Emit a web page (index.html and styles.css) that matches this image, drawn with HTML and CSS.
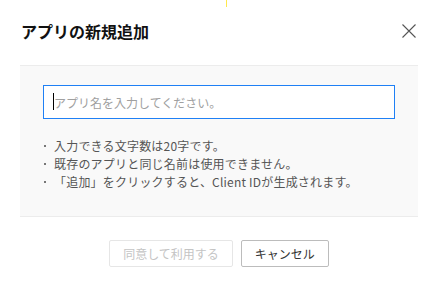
FILE: index.html
```html
<!DOCTYPE html>
<html lang="ja">
  <head>
    <meta charset="UTF-8" />
    <meta name="viewport" content="width=device-width, initial-scale=1.0" />
    <title>アプリの新規追加</title>
    <link rel="stylesheet" href="styles.css">
  </head>
  <body>
    <div class="top-mark"></div>
    <div class="dialog">
      <div class="dialog-header">
        <h2>アプリの新規追加</h2>
        <span class="dialog-close">
          <svg width="14" height="14" viewBox="0 0 14 14">
            <path d="M0.5 0.5 L13.5 13.5 M13.5 0.5 L0.5 13.5" stroke="#555" stroke-width="1.1" fill="none" />
          </svg>
        </span>
      </div>

      <div class="dialog-body">
        <div class="name-field">
          <input type="text" id="appName" placeholder="アプリ名を入力してください。" />
          <span class="fake-caret"></span>
        </div>
        <ul class="notes">
          <li>入力できる文字数は20字です。</li>
          <li>既存のアプリと同じ名前は使用できません。</li>
          <li>「追加」をクリックすると、Client IDが生成されます。</li>
        </ul>
      </div>

      <div class="dialog-actions">
        <button class="btn" disabled>同意して利用する</button>
        <button class="btn">キャンセル</button>
      </div>
    </div>
  </body>
</html>
```

FILE: styles.css
```css
@charset "UTF-8";
* {
  padding: 0;
  margin: 0;
  box-sizing: border-box;
}

body {
  font-family: "Noto Sans CJK JP", "Noto Sans", sans-serif;
  background: #fff;
  color: #333;
  width: 438px;
  position: relative;
}

/* petit trait jaune en haut */
.top-mark {
  position: absolute;
  top: 0;
  left: 226px;
  width: 1px;
  height: 7px;
  background: #ffe94d;
}

.dialog {
  padding: 0 20px;
}

.dialog-header {
  height: 65px;
  display: flex;
  align-items: center;
  justify-content: space-between;
  padding: 0 2px 3px 1px;
}

.dialog-header h2 {
  font-size: 16px;
  font-weight: bold;
  color: #111;
  line-height: 24px;
}

.dialog-close {
  display: flex;
  cursor: pointer;
}

.dialog-body {
  background: #f9f9f9;
  border-top: 1px solid #ececec;
  border-bottom: 1px solid #ececec;
  padding: 19px 23px 25px;
}

.name-field {
  position: relative;
}

.name-field input {
  width: 100%;
  height: 34px;
  border: 1px solid #1f80f5;
  background: #fff;
  padding: 0 10px;
  font-family: inherit;
  font-size: 12px;
  color: #333;
  outline: none;
}

.name-field input::placeholder {
  color: #a0a0a0;
}

.fake-caret {
  position: absolute;
  left: 10px;
  top: 8px;
  width: 1px;
  height: 17px;
  background: #000;
}

.notes {
  list-style: none;
  margin-top: 18px;
  font-size: 12px;
  line-height: 18px;
  letter-spacing: 0.2px;
  color: #555;
}

.notes li {
  display: flex;
  align-items: center;
}

.notes li::before {
  content: "";
  width: 2px;
  height: 2px;
  background: #777;
  margin: 0 8px 0 1px;
}

.dialog-actions {
  display: flex;
  justify-content: center;
  gap: 8px;
  padding-top: 23px;
}

.btn {
  height: 27px;
  padding: 0 13px;
  font-family: inherit;
  font-size: 12px;
  background: #fff;
  color: #333;
  border: 1px solid #bcbcbc;
  border-radius: 2px;
  cursor: pointer;
}

.btn:disabled {
  color: #c4c4c4;
  border-color: #e6e6e6;
  cursor: default;
}
```
